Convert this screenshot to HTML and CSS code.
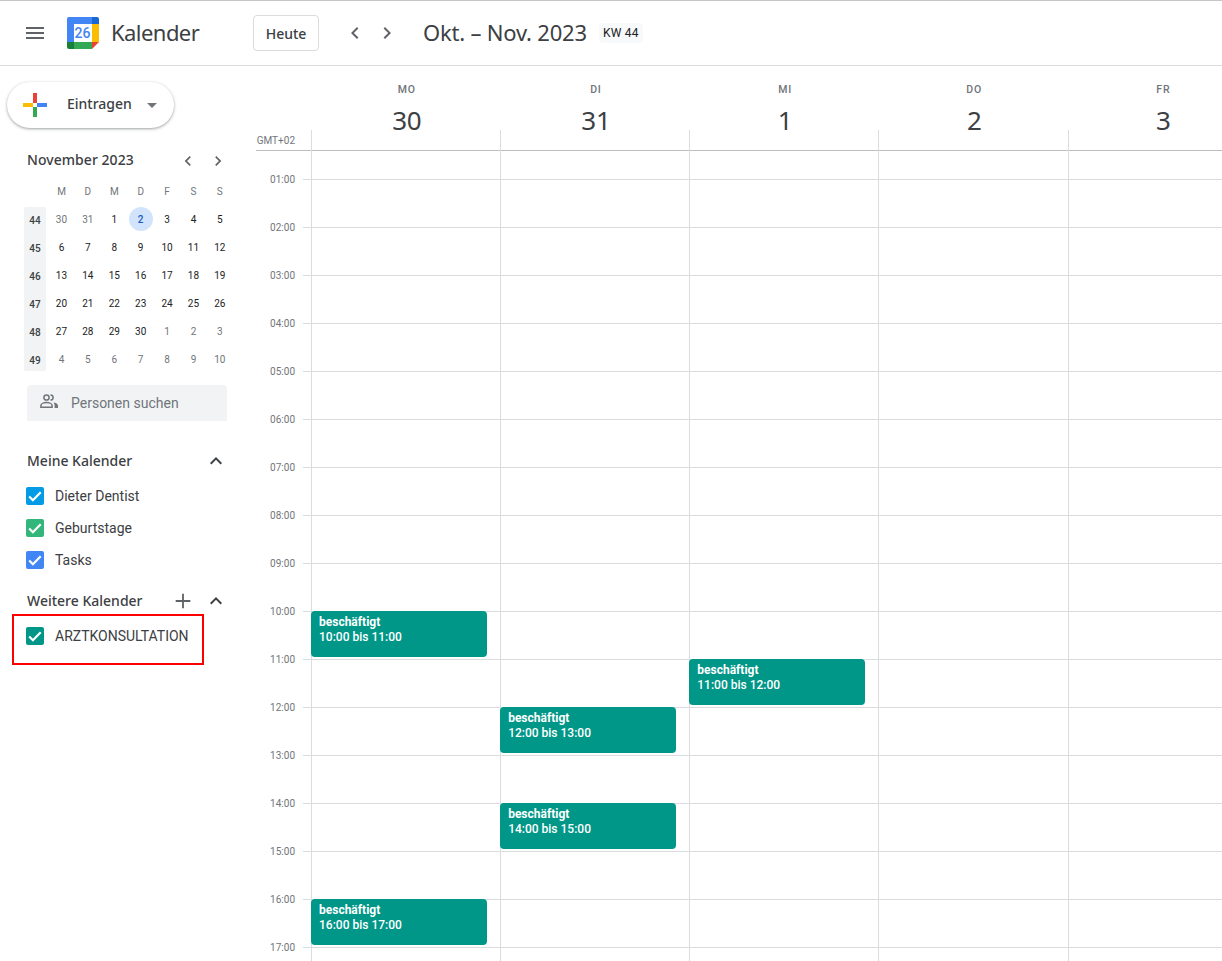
FILE: index.html
```html
<!DOCTYPE html>
<html lang="de">
<head>
<meta charset="utf-8">
<title>Kalender</title>
<link rel="stylesheet" href="styles.css">
</head>
<body>
<div class="app">
  <header class="topbar">
    <svg class="icon menu-icon" viewBox="0 0 24 24"><path d="M3 18h18v-2H3v2zm0-5h18v-2H3v2zm0-7v2h18V6H3z"/></svg>
    <svg class="logo" viewBox="0 0 32 32">
      <path fill="#fff" d="M7 7h18v18H7z"/>
      <path fill="#4285f4" d="M2 0h23v7H7v18H0V2a2 2 0 0 1 2-2z"/>
      <path fill="#1967d2" d="M25 0h5a2 2 0 0 1 2 2v5h-7z"/>
      <path fill="#fbbc04" d="M25 7h7v18h-7z"/>
      <path fill="#34a853" d="M7 25h18v7H7z"/>
      <path fill="#188038" d="M0 25h7v7H2a2 2 0 0 1-2-2z"/>
      <path fill="#ea4335" d="M25 25h7l-7 7z"/>
      <text class="logo-num" x="15.5" y="21" text-anchor="middle">26</text>
    </svg>
    <span class="brand">Kalender</span>
    <button class="today">Heute</button>
    <svg class="icon nav-prev" viewBox="0 0 24 24"><path d="M15.41 7.41L14 6l-6 6 6 6 1.41-1.41L10.83 12z"/></svg>
    <svg class="icon nav-next" viewBox="0 0 24 24"><path d="M10 6L8.59 7.41 13.17 12l-4.58 4.59L10 18l6-6z"/></svg>
    <span class="range">Okt. – Nov. 2023</span>
    <span class="kw">KW 44</span>
  </header>

  <div class="content">
    <aside class="sidebar">
      <button class="create">
        <svg class="plus" viewBox="0 0 24 24">
          <path fill="#ea4335" d="M10 0h4v10h-4z"/>
          <path fill="#4285f4" d="M14 10h10v4H14z"/>
          <path fill="#34a853" d="M10 14h4v10h-4z"/>
          <path fill="#fbbc04" d="M0 10h10v4H0z"/>
        </svg>
        <span class="create-label">Eintragen</span>
        <span class="caret"></span>
      </button>

      <div class="mini-head">
        <span class="mini-title">November 2023</span>
        <svg class="icon mini-prev" viewBox="0 0 24 24"><path d="M15.41 7.41L14 6l-6 6 6 6 1.41-1.41L10.83 12z"/></svg>
        <svg class="icon mini-next" viewBox="0 0 24 24"><path d="M10 6L8.59 7.41 13.17 12l-4.58 4.59L10 18l6-6z"/></svg>
      </div>

      <div class="mini">
        <div class="weeks">
          <span>44</span><span>45</span><span>46</span><span>47</span><span>48</span><span>49</span>
        </div>
        <div class="mini-grid">
          <span class="dow">M</span><span class="dow">D</span><span class="dow">M</span><span class="dow">D</span><span class="dow">F</span><span class="dow">S</span><span class="dow">S</span>
          <span class="off">30</span><span class="off">31</span><span>1</span><span class="now"><b>2</b></span><span>3</span><span>4</span><span>5</span>
          <span>6</span><span>7</span><span>8</span><span>9</span><span>10</span><span>11</span><span>12</span>
          <span>13</span><span>14</span><span>15</span><span>16</span><span>17</span><span>18</span><span>19</span>
          <span>20</span><span>21</span><span>22</span><span>23</span><span>24</span><span>25</span><span>26</span>
          <span>27</span><span>28</span><span>29</span><span>30</span><span class="off">1</span><span class="off">2</span><span class="off">3</span>
          <span class="off">4</span><span class="off">5</span><span class="off">6</span><span class="off">7</span><span class="off">8</span><span class="off">9</span><span class="off">10</span>
        </div>
      </div>

      <div class="people">
        <svg class="people-icon" viewBox="0 0 18 14">
          <circle cx="6.5" cy="3.5" r="2.6"/>
          <path d="M.9 13.2v-1.6c0-1.9 3-3 5.6-3s5.6 1.100 5.600 3v1.600z"/>
          <path d="M10.500.9a2.600 2.600 0 0 1 0 5.200"/>
          <path class="solid" d="M13.500 8.600c2.400.3 4.500 1.300 4.500 3.200V14h-3.400v-2.400c0-1.200-.4-2.200-1.100-3z"/>
        </svg>
        <span>Personen suchen</span>
      </div>

      <div class="cal-head first">
        <span class="cal-title">Meine Kalender</span>
        <svg class="icon expand" viewBox="0 0 24 24"><path d="M12 8l-6 6 1.410 1.410L12 10.830l4.590 4.580L18 14z"/></svg>
      </div>
      <div class="cal-item"><span class="check blue"><svg viewBox="0 0 18 18"><path d="M3.200 9.500l3.700 3.700 7.800-8"/></svg></span><span>Dieter Dentist</span></div>
      <div class="cal-item"><span class="check green"><svg viewBox="0 0 18 18"><path d="M3.200 9.500l3.700 3.700 7.800-8"/></svg></span><span>Geburtstage</span></div>
      <div class="cal-item"><span class="check indigo"><svg viewBox="0 0 18 18"><path d="M3.200 9.500l3.700 3.700 7.800-8"/></svg></span><span>Tasks</span></div>

      <div class="cal-head second">
        <span class="cal-title">Weitere Kalender</span>
        <svg class="icon add" viewBox="0 0 24 24"><path d="M20 13h-7v7h-2v-7H4v-2h7V4h2v7h7z"/></svg>
        <svg class="icon expand" viewBox="0 0 24 24"><path d="M12 8l-6 6 1.410 1.410L12 10.830l4.590 4.580L18 14z"/></svg>
      </div>
      <div class="highlight">
        <div class="cal-item"><span class="check teal"><svg viewBox="0 0 18 18"><path d="M3.200 9.500l3.700 3.700 7.800-8"/></svg></span><span>ARZTKONSULTATION</span></div>
      </div>
    </aside>

    <main class="main">
      <div class="day-heads">
        <div class="day-head"><span class="dow-name">MO</span><span class="day-num">30</span></div>
        <div class="day-head"><span class="dow-name">DI</span><span class="day-num">31</span></div>
        <div class="day-head"><span class="dow-name">MI</span><span class="day-num">1</span></div>
        <div class="day-head"><span class="dow-name">DO</span><span class="day-num">2</span></div>
        <div class="day-head"><span class="dow-name">FR</span><span class="day-num">3</span></div>
      </div>
      <div class="allday">
        <span class="gmt">GMT+02</span>
        <div class="allday-cell"></div><div class="allday-cell"></div><div class="allday-cell"></div><div class="allday-cell"></div><div class="allday-cell"></div>
      </div>
      <div class="grid">
        <div class="times">
          <span>01:00</span><span>02:00</span><span>03:00</span><span>04:00</span><span>05:00</span><span>06:00</span><span>07:00</span><span>08:00</span><span>09:00</span><span>10:00</span><span>11:00</span><span>12:00</span><span>13:00</span><span>14:00</span><span>15:00</span><span>16:00</span><span>17:00</span>
        </div>
        <div class="day">
          <div class="event" style="top:460px"><strong>beschäftigt</strong><span>10:00 bis 11:00</span></div>
          <div class="event" style="top:748px"><strong>beschäftigt</strong><span>16:00 bis 17:00</span></div>
        </div>
        <div class="day">
          <div class="event" style="top:556px"><strong>beschäftigt</strong><span>12:00 bis 13:00</span></div>
          <div class="event" style="top:652px"><strong>beschäftigt</strong><span>14:00 bis 15:00</span></div>
        </div>
        <div class="day">
          <div class="event" style="top:508px"><strong>beschäftigt</strong><span>11:00 bis 12:00</span></div>
        </div>
        <div class="day"></div>
        <div class="day"></div>
      </div>
    </main>
  </div>
</div>
</body>
</html>
```
FILE: styles.css
```css
* { box-sizing: border-box; }
html, body { margin: 0; height: 100%; overflow: hidden; background: #fff; }
body { font-family: Roboto, "Liberation Sans", sans-serif; color: #3c4043; }
.app { display: flex; flex-direction: column; height: 961px; width: 1222px; overflow: hidden; }
.icon { display: block; fill: #5f6368; flex: none; }

/* top bar */
.topbar {
  display: flex; align-items: center; height: 66px; flex: none;
  border-top: 1px solid #c6c6c6; border-bottom: 1px solid #dadce0;
}
.menu-icon { width: 24px; height: 24px; margin-left: 23px; }
.logo { width: 32px; height: 32px; margin-left: 20px; flex: none; }
.logo-num { font: 500 14px Roboto, sans-serif; fill: #4285f4; }
.brand { font: 400 22px/30px "Noto Sans", sans-serif; margin: -2px 0 0 12px; width: 142px; letter-spacing: -.55px; }
.today {
  width: 66px; height: 36px; padding: 0; background: #fff; color: #3c4043;
  border: 1px solid #dadce0; border-radius: 4px; font: 500 14px "Noto Sans", sans-serif;
}
.nav-prev { width: 24px; height: 24px; margin-left: 24px; }
.nav-next { width: 24px; height: 24px; margin-left: 8px; }
.range { font: 400 22px/30px "Noto Sans", sans-serif; margin: -2px 0 0 24px; letter-spacing: -.2px; white-space: nowrap; }
.kw {
  margin-left: 12px; width: 44px; height: 20px; text-align: center;
  background: #f8f9fa; border-radius: 4px; font: 400 12px/20px Roboto, sans-serif; letter-spacing: .2px; color: #202124;
}

/* layout */
.content { display: flex; flex: 1; min-height: 0; }
.sidebar { width: 256px; flex: none; }
.main { flex: 1; min-width: 0; overflow: hidden; }

/* create */
.create {
  display: flex; align-items: center; width: 167px; height: 46px; margin: 16px 0 0 7px; padding: 0 0 0 16px;
  background: #fff; border: 0; border-radius: 24px; color: #3c4043;
  box-shadow: 0 1px 2px 0 rgba(60,64,67,.3), 0 1px 3px 1px rgba(60,64,67,.15);
}
.plus { width: 24px; height: 24px; flex: none; }
.create-label { font: 500 14px/18px "Noto Sans", sans-serif; margin: -2px 0 0 20px; width: 80px; text-align: left; }
.caret { width: 0; height: 0; border: 5px solid transparent; border-top-color: #70757a; border-bottom: 0; }

/* mini calendar */
.mini-head { display: flex; align-items: center; height: 24px; margin: 20px 0 0 27px; }
.mini-title { font: 500 14px/18px "Noto Sans", sans-serif; width: 151px; white-space: nowrap; letter-spacing: .05px; }
.mini-prev { width: 20px; height: 20px; margin-top: 2px; }
.mini-next { width: 20px; height: 20px; margin: 2px 0 0 10px; }
.mini { display: flex; margin: 5px 0 0 24px; }
.weeks {
  display: flex; flex-direction: column; width: 22px; height: 164px; margin-top: 30px;
  background: #f1f3f4; border-radius: 2px; font: 500 10px Roboto, sans-serif; color: #3c4043;
}
.weeks span { flex: none; height: 28px; line-height: 28px; text-align: center; }
.mini-grid {
  display: grid; grid-template-columns: repeat(7, 26.4px); grid-auto-rows: 28px;
  margin-left: 2.3px; font: 400 10px Roboto, sans-serif; color: #202124;
}
.mini-grid span { display: flex; align-items: center; justify-content: center; }
.mini-grid .dow { color: #70757a; }
.mini-grid .off { color: #70757a; }
.now b {
  display: flex; align-items: center; justify-content: center; width: 24px; height: 24px;
  border-radius: 50%; background: #d2e3fc; color: #185abc; font-weight: 500;
}

/* people */
.people {
  display: flex; align-items: center; width: 200px; height: 36px; margin: 12px 0 0 27px; padding-left: 13px;
  background: #f1f3f4; border-radius: 4px 4px 0 0; font: 400 14px Roboto, sans-serif; color: #70757a;
}
.people-icon {
  display: block; flex: none; width: 18px; height: 14px; margin-right: 13px;
  fill: none; stroke: #70757a; stroke-width: 1.5; position: relative; top: -2px;
}
.people-icon .solid { fill: #70757a; stroke: none; }

/* calendars */
.cal-head { display: flex; align-items: center; height: 24px; margin-left: 27px; width: 200px; }
.cal-head.first { margin-top: 28px; }
.cal-head.second { margin-top: 13px; }
.cal-title { font: 500 14px/18px "Noto Sans", sans-serif; color: #3c4043; white-space: nowrap; }
.expand { width: 24px; height: 24px; margin-left: auto; margin-right: -1px; fill: #3c4043; }
.add { width: 22px; height: 22px; margin-left: auto; fill: #5f6368; }
.add + .expand { margin-left: 10px; }
.cal-item { display: flex; align-items: center; height: 32px; padding-left: 26px; font: 400 14px Roboto, sans-serif; color: #3c4043; }
.cal-head + .cal-item { margin-top: 7px; }
.check { width: 18px; height: 18px; border-radius: 2px; margin-right: 11px; flex: none; }
.check svg { display: block; width: 18px; height: 18px; fill: none; stroke: #fff; stroke-width: 2.2; }
.blue { background: #039be5; }
.green { background: #33b679; }
.indigo { background: #4285f4; }
.teal { background: #009688; }
.highlight { width: 192px; height: 51px; margin: 1px 0 0 12px; border: 2px solid #f00; padding-top: 4px; }
.highlight .cal-item { padding-left: 12px; }

/* week view */
.day-heads { display: grid; grid-template-columns: repeat(5, 189.15px); height: 64px; margin-left: 56.2px; }
.day-head { display: flex; flex-direction: column; align-items: center; }
.dow-name { font: 500 10.5px/14px Roboto, sans-serif; letter-spacing: .8px; color: #70757a; margin-top: 17px; }
.day-num { font: 400 26px/32px "Noto Sans", sans-serif; letter-spacing: -.3px; color: #3c4043; margin-top: 7px; }
.allday {
  display: grid; grid-template-columns: 55px repeat(5, 189.15px); height: 21px;
  border-bottom: 1px solid #bdbdbd;
}
.gmt { font: 400 10px/21px Roboto, sans-serif; color: #70757a; text-align: right; padding-right: 16px; white-space: nowrap; }
.allday-cell { border-left: 1px solid #dadce0; }
.grid { display: grid; grid-template-columns: 55px repeat(5, 189.15px); height: 900px; }
.times {
  display: flex; flex-direction: column; padding-top: 5px;
  font: 400 10px/48px Roboto, sans-serif; color: #70757a;
  background: linear-gradient(#dadce0 1px, transparent 1px) right 28px / 8px 48px repeat-y;
}
.times span { display: block; flex: none; height: 48px; text-align: right; padding-right: 16px; }
.day {
  position: relative; border-left: 1px solid #dadce0;
  background: linear-gradient(#dadce0 1px, transparent 1px) 0 28px / 100% 48px repeat-y;
}
.event {
  position: absolute; left: -1px; width: 176px; height: 46px; padding: 4px 8px;
  background: #009688; border-radius: 4px; color: #fff; font: 500 12px/15px Roboto, sans-serif;
}
.event strong { display: block; font-weight: 700; }
.event span { display: block; }
```
